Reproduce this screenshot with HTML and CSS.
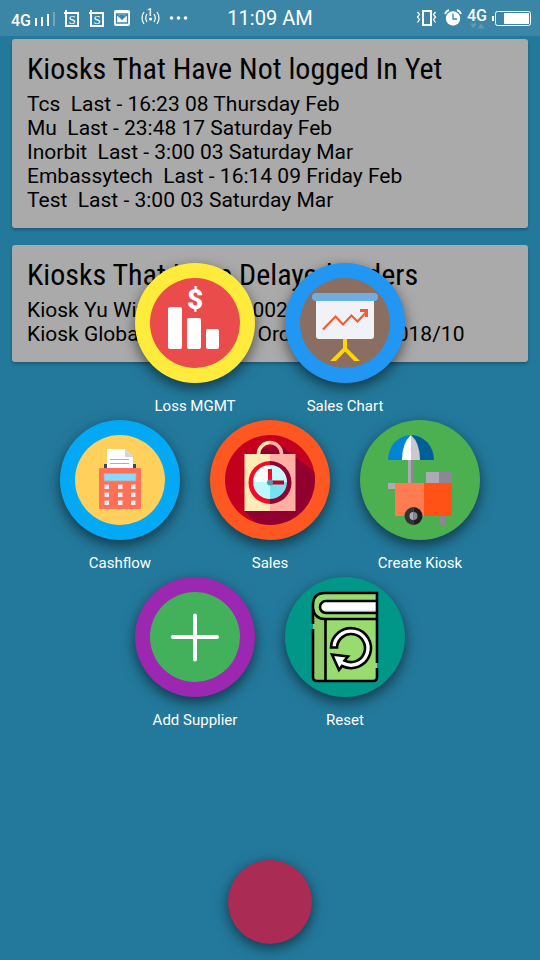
FILE: index.html
```html
<!DOCTYPE html>
<html lang="en">
<head>
<meta charset="utf-8">
<meta name="viewport" content="width=device-width, initial-scale=1">
<title>Kiosks</title>
<link rel="stylesheet" href="styles.css">
</head>
<body>
<header class="status">
  <svg class="status-icons" width="190" height="36" viewBox="0 0 190 36" aria-hidden="true">
    <text class="net" x="11" y="26" font-size="16">4G</text>
    <path d="M36 18v8M42 17v9M48 14v12" stroke="#fff" stroke-width="2"/>
    <path d="M54 12v14" stroke="#6fa8c0" stroke-width="2"/>
    <g id="s-note">
      <path d="M66 10v16h12V13H64" fill="none" stroke="#fff" stroke-width="2"/>
      <text class="serif" x="72" y="24" font-size="13" text-anchor="middle">S</text>
    </g>
    <use href="#s-note" x="25"/>
    <rect x="114" y="10" width="16" height="16" rx="2" fill="#fff"/>
    <path d="M116.500 14h11v9h-11zl5.500 5 5.500-5" fill="none" stroke="#3b86a6" stroke-width="1.300"/>
    <path d="M119 15h6l-3 5z" fill="#3b86a6"/>
    <path d="M144 12q-4 6 0 12M147 14q-2.500 4 0 8M157 12q4 6 0 12M154 14q2.500 4 0 8" fill="none" stroke="#fff" stroke-width="1.200"/>
    <text class="net" x="147" y="16" font-size="10">1</text>
    <circle cx="150.500" cy="19" r="1.600" fill="#fff"/>
    <g fill="#fff"><circle cx="171.500" cy="18" r="1.800"/><circle cx="178.500" cy="18" r="1.800"/><circle cx="185.500" cy="18" r="1.800"/></g>
  </svg>
  <time class="clock">11:09 AM</time>
  <svg class="status-icons status-end" width="124" height="36" viewBox="416 0 124 36" aria-hidden="true">
    <rect x="423" y="11" width="8" height="14" fill="none" stroke="#fff" stroke-width="2"/>
    <path d="M417.500 12l2 2.500-2 2.500 2 2.500-2 3M435.500 12l-2 2.500 2 2.500-2 2.500 2 3" fill="none" stroke="#fff" stroke-width="1.300"/>
    <circle cx="453" cy="18.500" r="7.200" fill="#fff"/>
    <path d="M445 14q1-3 4-4M461 14q-1-3-4-4" fill="none" stroke="#fff" stroke-width="2"/>
    <path d="M453 13.500v5.500h4" fill="none" stroke="#3b86a6" stroke-width="1.300"/>
    <text class="net" x="467" y="21" font-size="16">4G</text>
    <path d="M470 23.500h7l-3.500 5zM477.500 28.500h7l-3.500-5z" fill="#6198b2"/>
    <rect x="495.500" y="11.500" width="35" height="14" rx="2" fill="none" stroke="#fff"/>
    <rect x="504" y="13" width="25" height="11" fill="#fff"/>
    <path d="M493 16v5" stroke="#fff" stroke-width="2"/>
  </svg>
</header>

<main class="screen">
  <section class="card">
    <h2>Kiosks That Have Not logged In Yet</h2>
    <ul>
      <li>Tcs  Last - 16:23 08 Thursday Feb</li>
      <li>Mu  Last - 23:48 17 Saturday Feb</li>
      <li>Inorbit  Last - 3:00 03 Saturday Mar</li>
      <li>Embassytech  Last - 16:14 09 Friday Feb</li>
      <li>Test  Last - 3:00 03 Saturday Mar</li>
    </ul>
  </section>
  <section class="card">
    <h2>Kiosks That Have Delayed Orders</h2>
    <ul>
      <li>Kiosk Yu With Order 000002018/10</li>
      <li>Kiosk Global Malls  With Order 0000002018/10</li>
    </ul>
  </section>

  <nav class="boom">
    <div class="row">
      <button class="item" type="button">
        <svg class="disc yellow" viewBox="0 0 120 120" aria-hidden="true">
          <circle cx="60" cy="60" r="45" fill="#ea4b4b"/>
          <g fill="#fff">
            <rect x="33" y="44" width="14" height="42" rx="2"/>
            <rect x="52" y="55" width="14" height="31" rx="2"/>
            <rect x="71" y="66" width="13" height="20" rx="2"/>
            <text class="dollar" x="60" y="46" font-size="28" text-anchor="middle">$</text>
          </g>
        </svg>
        <span>Loss MGMT</span>
      </button>
      <button class="item" type="button">
        <svg class="disc blue" viewBox="0 0 120 120" aria-hidden="true">
          <circle cx="60" cy="60" r="45" fill="#8a6e62"/>
          <path d="M58 76h4v9l13 13h-6l-9-9.500-9 9.500h-6l13-13z" fill="#ffd500"/>
          <path d="M31 36h58v37q0 3-3 3H34q-3 0-3-3z" fill="#f1f2f7"/>
          <rect x="27" y="30" width="66" height="8" rx="4" fill="#6faee0"/>
          <path d="M38 66.500l12.500-13 7.500 8 8.500-9 6 6 8.500-9" fill="none" stroke="#f55a30" stroke-width="2.200"/>
          <path d="M75 46h8v8h-3v-5h-5z" fill="#f55a30"/>
        </svg>
        <span>Sales Chart</span>
      </button>
    </div>
    <div class="row">
      <button class="item" type="button">
        <svg class="disc sky" viewBox="0 0 120 120" aria-hidden="true">
          <circle cx="60" cy="60" r="45" fill="#ffd05b"/>
          <path d="M44 44h32v6H44z" fill="#324a5e"/>
          <path d="M47 29h18l8 8v12H47z" fill="#fff"/>
          <path d="M65 29v8h8z" fill="#cdd6e0"/>
          <path d="M50 39.500h19M50 43.500h19" stroke="#4cdbc4"/>
          <rect x="39" y="48" width="42" height="41" rx="1.500" fill="#ff7058"/>
          <rect x="44" y="53.500" width="32" height="7.500" fill="#84dbff" stroke="#e5957e" stroke-width=".8"/>
          <g fill="#e6e9ee">
            <path d="M44.500 64.500H49V69h-4.500zM58 64.500h4.500V69H58zM71 64.500h4.500V69H71z"/>
            <path d="M44.500 72.500H49V77h-4.500zM58 72.500h4.500V77H58zM71 72.500h4.500V77H71z"/>
            <path d="M44.500 80.500H49V85h-4.500zM58 80.500h4.500V85H58zM71 80.500h4.500V85H71z"/>
          </g>
        </svg>
        <span>Cashflow</span>
      </button>
      <button class="item" type="button">
        <svg class="disc orange" viewBox="0 0 120 120" aria-hidden="true">
          <defs><clipPath id="sales-disc"><circle cx="60" cy="60" r="45"/></clipPath></defs>
          <circle cx="60" cy="60" r="45" fill="#c3001e"/>
          <path clip-path="url(#sales-disc)" d="M69 24l37 29v55H51L34.500 91 50 30z" fill="#91002f"/>
          <path d="M48.500 36v-2.500a11.500 11.500 0 0 1 11.500-11" fill="none" stroke="#ffe8b2" stroke-width="3.600"/>
          <path d="M71.500 36v-2.500a11.500 11.500 0 0 0-11.500-11" fill="none" stroke="#ffb0a0" stroke-width="3.600"/>
          <path d="M34.500 34H60v57H34.500z" fill="#ffebb5"/>
          <path d="M60 34h25.500v57H60z" fill="#ffafa2"/>
          <path d="M60 41a21 21 0 0 0 0 43z" fill="#f50a25"/>
          <path d="M60 41a21 21 0 0 1 0 43z" fill="#91002f"/>
          <path d="M60 45a17 17 0 0 0-17 17h17z" fill="#fff"/>
          <path d="M60 45a17 17 0 0 1 17 17H60z" fill="#c4fbff"/>
          <path d="M43 62a17 17 0 0 0 17 17V62z" fill="#bdf7ff"/>
          <path d="M77 62a17 17 0 0 1-17 17V62z" fill="#76e1f0"/>
          <path d="M60 62V49" stroke="#f50a25" stroke-width="4"/>
          <path d="M60 62.500h14" stroke="#c3001e" stroke-width="4"/>
          <circle cx="60" cy="62.500" r="3" fill="#5596a8"/>
        </svg>
        <span>Sales</span>
      </button>
      <button class="item" type="button">
        <svg class="disc green" viewBox="0 0 120 120" aria-hidden="true">
          <path d="M48 38h3v26h-3z" fill="#acabb1"/>
          <path d="M51 38h3v26h-3z" fill="#8b8893"/>
          <path d="M28 40a23 25 0 0 1 23-25L48 40z" fill="#0084d6"/>
          <path d="M74 40a23 25 0 0 0-23-25L54 40z" fill="#005f98"/>
          <path d="M42 40q0-17 9-25v25z" fill="#fff"/>
          <path d="M60 40q0-17-9-25v25z" fill="#c9c9ce"/>
          <path d="M28 63h8v6h-8zM66 52h13v12H66z" fill="#acabb1"/>
          <path d="M79 52h13v12H79zM80 96h5v9h-5z" fill="#8b8893"/>
          <path d="M35 63h29v33H35z" fill="#ff7b50"/>
          <path d="M64 63h28v33H64z" fill="#ff5217"/>
          <path d="M53.500 87a9 9 0 0 0 0 18z" fill="#333336"/>
          <path d="M53.500 87a9 9 0 0 1 0 18z" fill="#1e1e20"/>
          <path d="M53.500 92a4 4 0 0 0 0 8z" fill="#acabb1"/>
          <path d="M53.500 92a4 4 0 0 1 0 8z" fill="#8b8893"/>
        </svg>
        <span>Create Kiosk</span>
      </button>
    </div>
    <div class="row">
      <button class="item" type="button">
        <svg class="disc purple" viewBox="0 0 120 120" aria-hidden="true">
          <circle cx="60" cy="60" r="45" fill="#43b05c"/>
          <path d="M60 38.500v44M38 60h44" stroke="#fff" stroke-width="4" stroke-linecap="round"/>
        </svg>
        <span>Add Supplier</span>
      </button>
      <button class="item" type="button">
        <svg class="disc teal" viewBox="0 0 120 120" aria-hidden="true">
          <path d="M92 16H38a10 10 0 0 0-10 10v74q0 4 4 4h56q4 0 4-4z" fill="#98dc70"/>
          <path d="M28 35q3 6 12 7v62h-8q-4 0-4-4z" fill="#8ecb68"/>
          <path d="M92 24H41a6 6 0 0 0 0 12h51z" fill="#fff"/>
          <path d="M92 34.500H38" stroke="#d0d0d0" stroke-width="2"/>
          <g fill="none" stroke="#000" stroke-width="2.600">
            <path d="M28 47V28q0-12 12-12h52v70"/>
            <path d="M92 24H41a6 6 0 0 0 0 12h51M92 42H40q-10 0-12-10M40.500 42v62M28 52v48q0 4 4 4h56q4 0 4-4v-9"/>
          </g>
          <path d="M46 70.500A20 20 0 1 1 57 89l-3 4-7-15.500 16 2-3.500 4A14 14 0 1 0 52 70.500z" fill="#fff" stroke="#000" stroke-width="2.600"/>
        </svg>
        <span>Reset</span>
      </button>
    </div>
  </nav>
  <button class="fab" type="button" aria-label="Close menu"></button>
</main>
</body>
</html>
```
FILE: styles.css
```css
* {
  box-sizing: border-box;
}

body {
  margin: 0;
  min-height: 100vh;
  display: flex;
  flex-direction: column;
  background: #23799b;
  font-family: Roboto, "Liberation Sans", sans-serif;
  color: #000;
}

.status {
  display: grid;
  grid-template-columns: 1fr auto 1fr;
  align-items: center;
  height: 36px;
  background: #3b86a6;
  color: #fff;
}

.status-icons {
  display: block;
}

.status-end {
  justify-self: end;
}

.clock {
  font-size: 20px;
  line-height: 36px;
}

.net {
  fill: #fff;
  font-family: Roboto, sans-serif;
  font-weight: 500;
}

.serif {
  fill: #fff;
  font-family: "Liberation Serif", serif;
}

.dollar {
  font-family: Roboto, sans-serif;
  font-weight: 900;
}

.screen {
  position: relative;
  flex: 1;
  display: flex;
  flex-direction: column;
  gap: 17px;
  padding: 3px 12px;
}

.card {
  padding: 12px 15px 16px;
  border-radius: 3px;
  background: #aaa;
  box-shadow: 0 2px 3px rgba(0, 0, 0, 0.25);
}

.card h2 {
  margin: 0 0 5px;
  font-family: "Roboto Condensed", "Liberation Sans Narrow", sans-serif;
  font-size: 30px;
  font-weight: 400;
  line-height: 36px;
}

.card ul {
  margin: 0;
  padding: 0;
  list-style: none;
  font-size: 21px;
  line-height: 24px;
}

.card li {
  white-space: pre-wrap;
}

/* Menu laid over the cards */
.boom {
  position: absolute;
  inset: 0;
  display: flex;
  flex-direction: column;
  justify-content: center;
  gap: 4px;
  padding-bottom: 3px;
}

.row {
  display: flex;
  justify-content: center;
  gap: 30px;
}

.item {
  display: flex;
  flex-direction: column;
  align-items: center;
  gap: 13px;
  width: 120px;
  padding: 0;
  border: 0;
  background: none;
  color: #fff;
  font-family: inherit;
  font-size: 15px;
  line-height: 20px;
}

.disc {
  display: block;
  width: 120px;
  height: 120px;
  border-radius: 50%;
  box-shadow: 0 5px 14px rgba(0, 0, 0, 0.55);
}

.yellow { background: #ffeb3b; }
.blue { background: #2196f3; }
.sky { background: #03a9f4; }
.orange { background: #ff5722; }
.green { background: #4caf50; }
.purple { background: #9c27b0; }
.teal { background: #009688; }

.fab {
  position: absolute;
  bottom: 16px;
  left: 50%;
  width: 84px;
  height: 84px;
  margin-left: -42px;
  padding: 0;
  border: 0;
  border-radius: 50%;
  background: #aa2c55;
  box-shadow: 0 4px 14px rgba(0, 0, 0, 0.55);
}
```
